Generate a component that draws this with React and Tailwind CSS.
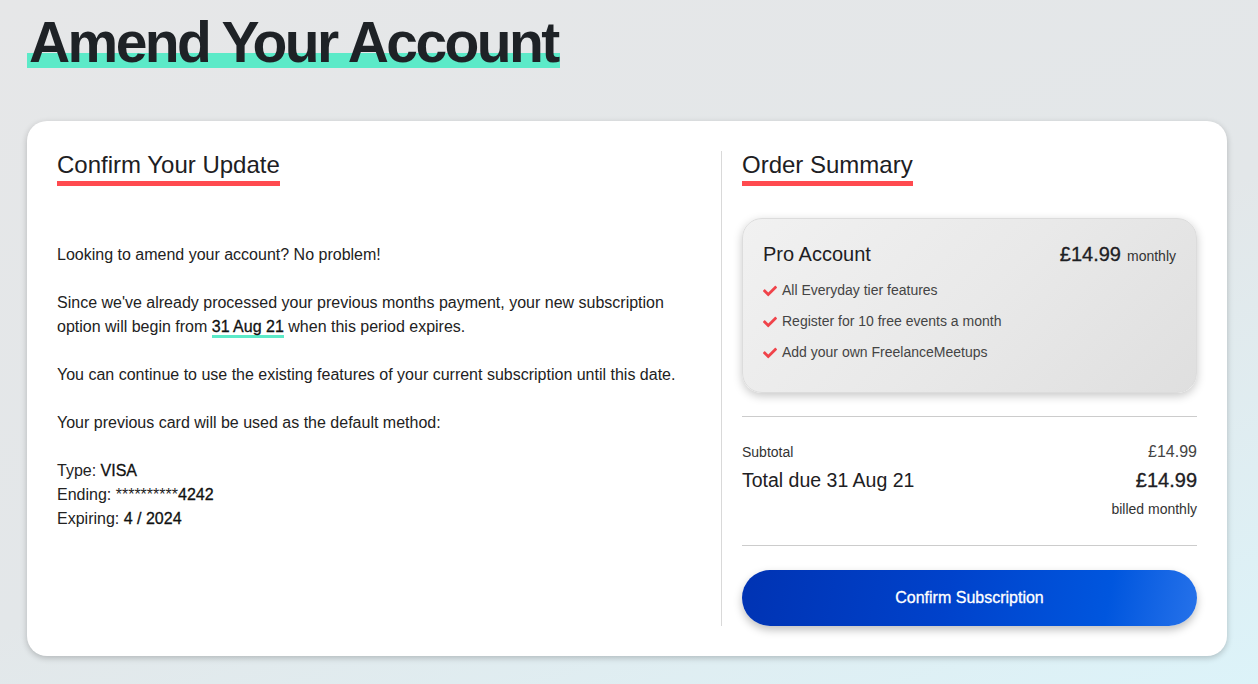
import { FaCheck } from "react-icons/fa";

const medium = "[-webkit-text-stroke:0.3px_currentColor]";

function SectionTitle({ children }) {
  return (
    <div>
      <h2 className="inline-block text-[24px] leading-[1.2] pb-[1px] border-b-[5px] border-[#ff4a4f] text-[#1d2023]">
        {children}
      </h2>
    </div>
  );
}

const features = [
  "All Everyday tier features",
  "Register for 10 free events a month",
  "Add your own FreelanceMeetups",
];

export default function App() {
  return (
    <div className="min-h-screen bg-[linear-gradient(160deg,#e6e7e8_0%,#e3e7e9_55%,#dcf3f9_100%)] pl-[27px] pr-[31px] pt-[14px] pb-8 font-['Liberation_Sans',Arial,sans-serif] text-[#222]">
      {/* Page title */}
      <h1 className="text-[57px] leading-none font-bold tracking-[-2.6px] text-[#1e2226]">
        <span className="inline-block pl-[2px] pr-[2px] bg-[linear-gradient(to_bottom,transparent_69%,#5ceac8_69%,#5ceac8_94%,transparent_94%)]">
          Amend Your Account
        </span>
      </h1>

      {/* Card */}
      <div className="mt-[50px] flex rounded-[20px] bg-white p-[30px] shadow-[0_2px_6px_rgba(0,0,0,0.22)]">
        {/* Left column */}
        <div className="flex-1 pr-5">
          <SectionTitle>Confirm Your Update</SectionTitle>

          <div className="mt-[57px] space-y-6 text-[16px] leading-6">
            <p>Looking to amend your account? No problem!</p>
            <p>
              Since we've already processed your previous months payment, your new subscription
              option will begin from{" "}
              <span className={`border-b-[3px] border-[#5ceac8] text-[#111] ${medium}`}>31 Aug 21</span>{" "}
              when this period expires.
            </p>
            <p>You can continue to use the existing features of your current subscription until this date.</p>
            <p>Your previous card will be used as the default method:</p>
            <div>
              <p>
                Type: <span className={`text-[#111] ${medium}`}>VISA</span>
              </p>
              <p>
                Ending: **********<span className={`text-[#111] ${medium}`}>4242</span>
              </p>
              <p>
                Expiring: <span className={`text-[#111] ${medium}`}>4 / 2024</span>
              </p>
            </div>
          </div>
        </div>

        {/* Right column */}
        <div className="w-[476px] border-l border-[#d9d9d9] pl-5 flex flex-col">
          <SectionTitle>Order Summary</SectionTitle>

          {/* Plan card */}
          <div className="mt-8 rounded-[20px] border border-[#dcdcdc] bg-[linear-gradient(135deg,#f1f1f1_0%,#e9e9e9_50%,#dfdfdf_100%)] pt-5 pb-[29px] pl-5 pr-[20px] shadow-[0_3px_10px_rgba(0,0,0,0.22)]">
            <div className="flex items-baseline justify-between">
              <span className="text-[20px] leading-7 text-[#1d2023]">Pro Account</span>
              <span className="text-[#1d2023]">
                <span className={`text-[20px] ${medium}`}>£14.99</span>
                <span className="ml-[6px] text-[14px] text-[#333]">monthly</span>
              </span>
            </div>
            <ul className="mt-3 flex flex-col gap-[11px]">
              {features.map((f) => (
                <li key={f} className="flex h-5 items-center gap-[5px] text-[14px] text-[#444]">
                  <FaCheck className="w-[14px] h-[14px] text-[#f0434a]" />
                  {f}
                </li>
              ))}
            </ul>
          </div>

          <div className="mt-[23px] border-t border-[#cccccc]" />

          {/* Totals */}
          <div className="mt-[25px] flex items-center justify-between leading-5">
            <span className="text-[14px] text-[#333]">Subtotal</span>
            <span className="text-[16px] text-[#444]">£14.99</span>
          </div>
          <div className="mt-[4px] flex items-center justify-between leading-7 text-[#1d2023]">
            <span className="text-[19.5px]">Total due 31 Aug 21</span>
            <span className={`text-[20px] ${medium}`}>£14.99</span>
          </div>
          <div className="mt-[5px] text-right text-[14px] leading-5 text-[#333]">billed monthly</div>

          <div className="mt-[26px] border-t border-[#cccccc]" />

          <button className={`mt-6 h-14 w-full rounded-full bg-[linear-gradient(100deg,#0033b3_0%,#0042cb_45%,#0056de_80%,#2672ea_100%)] text-[16px] text-white shadow-[0_4px_8px_rgba(0,0,0,0.25)] ${medium}`}>
            Confirm Subscription
          </button>
        </div>
      </div>
    </div>
  );
}
